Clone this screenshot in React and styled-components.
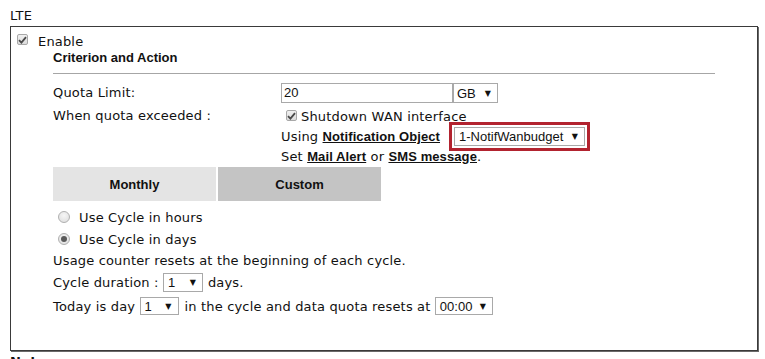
import React from "react";
import styled, { createGlobalStyle } from "styled-components";

const Global = createGlobalStyle`
  html, body { margin: 0; padding: 0; background: #fff; overflow: hidden; }
  body { font-family: "DejaVu Sans", Verdana, sans-serif; font-size: 13px; letter-spacing: 0.17px; color: #111; }
`;

const Page = styled.div`
  width: 765px;
  height: 359px;
  padding: 0 7px 0 10px;
  box-sizing: border-box;
`;

const Title = styled.div`
  font-size: 13px;
  line-height: 16px;
  padding-top: 8px;
  height: 18px;
`;

const Panel = styled.div`
  border: 1px solid #3a3a3a;
  box-shadow: 1px 1px 0 #6a6a6a;
  padding: 5px 6px 0 6px;
  height: 325px;
  box-sizing: border-box;
  width: 748px;
`;

const CheckRow = styled.label`
  display: flex;
  align-items: center;
  height: 18px;
  gap: 10px;
`;

const CheckBox = styled.span`
  width: 11px;
  height: 11px;
  box-sizing: border-box;
  border: 1px solid #a8a8a8;
  border-radius: 2px;
  background: linear-gradient(#f0f0f0, #dcdcdc);
  display: inline-flex;
  align-items: center;
  justify-content: center;
  flex: none;
  margin-top: ${(p) => p.$nudge || 0}px;
  svg { display: block; }
`;

const Section = styled.div`
  margin-left: 36px;
  width: 662px;
`;

const Heading = styled.div`
  font-family: "Liberation Sans", Arial, sans-serif;
  font-weight: bold;
  font-size: 13px;
  letter-spacing: 0;
  line-height: 16px;
  height: 16px;
`;

const Rule = styled.div`
  margin-top: 7px;
  border-top: 1px solid #a6a6a6;
  height: 0;
`;

const FormGrid = styled.div`
  display: grid;
  grid-template-columns: 228px 1fr;
  margin-top: 9px;
`;

const Label = styled.div`
  line-height: ${(p) => p.$lh || 20}px;
  height: ${(p) => p.$lh || 20}px;
  padding-top: ${(p) => p.$pt || 0}px;
`;

const Cell = styled.div`
  display: flex;
  flex-direction: column;
  align-items: flex-start;
`;

const Line = styled.div`
  display: flex;
  align-items: center;
  height: ${(p) => p.$h}px;
  margin-top: ${(p) => p.$mt || 0}px;
  white-space: pre;
`;

const TextInput = styled.div`
  width: 172px;
  height: 20px;
  box-sizing: border-box;
  border: 1px solid #a9a9a9;
  font-family: "Liberation Sans", Arial, sans-serif;
  font-size: 13px;
  letter-spacing: 0;
  line-height: 18px;
  padding-left: 2px;
`;

const Select = styled.div`
  display: inline-flex;
  align-items: center;
  justify-content: space-between;
  width: ${(p) => p.$w}px;
  height: ${(p) => p.$h || 19}px;
  box-sizing: border-box;
  border: 1px solid #a9a9a9;
  background: #fff;
  font-family: "Liberation Sans", Arial, sans-serif;
  font-size: 13px;
  letter-spacing: 0;
  padding: 0 6px 0 ${(p) => p.$pl || 4}px;
  margin: 0 ${(p) => p.$mr || 0}px 0 ${(p) => p.$ml || 0}px;
  flex: none;
  outline: ${(p) => (p.$highlight ? "3px solid #b2232f" : "none")};
  outline-offset: 2px;
  &::after {
    content: "▼";
    font-family: "DejaVu Sans", sans-serif;
    font-size: 8px;
    color: #111;
  }
`;

const Link = styled.a`
  font-family: "Liberation Sans", Arial, sans-serif;
  font-weight: bold;
  font-size: 13px;
  letter-spacing: 0.1px;
  color: #111;
  text-decoration: underline;
`;

const Tabs = styled.div`
  display: flex;
  gap: 2px;
  margin-top: 2px;
`;

const Tab = styled.div`
  width: 163px;
  height: 34px;
  display: flex;
  align-items: center;
  justify-content: center;
  background: ${(p) => (p.$active ? "#e4e4e4" : "#c4c4c4")};
  font-family: "Liberation Sans", Arial, sans-serif;
  font-weight: bold;
  font-size: 13px;
  letter-spacing: 0;
`;

const RadioRow = styled.label`
  display: flex;
  align-items: center;
  height: 22px;
  gap: 9px;
  padding-left: 5px;
`;

const Radio = styled.span`
  width: 12px;
  height: 12px;
  box-sizing: border-box;
  border-radius: 50%;
  border: 1px solid #b0b0b0;
  background: radial-gradient(circle at 50% 35%, #f6f6f6, #dcdcdc);
  display: inline-flex;
  align-items: center;
  justify-content: center;
  flex: none;
  &::after {
    content: "";
    width: 6px;
    height: 6px;
    border-radius: 50%;
    background: ${(p) => (p.$checked ? "#5a5a5a" : "transparent")};
  }
`;

const Radios = styled.div`
  margin-top: 5px;
`;

const TextLine = styled.div`
  display: flex;
  align-items: center;
  height: ${(p) => p.$h || 22}px;
  white-space: pre;
`;

const Note = styled.div`
  font-weight: bold;
  font-size: 13px;
  margin-top: 3px;
`;

const Check = () => (
  <svg width="9" height="8" viewBox="0 0 9 8">
    <path d="M1 4.2 L3.4 6.6 L8 1.2" fill="none" stroke="#4a4a4a" strokeWidth="1.8" />
  </svg>
);

export default function App() {
  return (
    <Page>
      <Global />
      <Title>LTE</Title>
      <Panel>
        <CheckRow>
          <CheckBox $nudge={-3}><Check /></CheckBox>
          <span>Enable</span>
        </CheckRow>
        <Section>
          <Heading>Criterion and Action</Heading>
          <Rule />
          <FormGrid>
            <Label>Quota Limit:</Label>
            <Cell>
              <Line $h={20}>
                <TextInput>20</TextInput>
                <Select $w={45} $h={20} $pl={3}>GB</Select>
              </Line>
            </Cell>
            <Label $lh={18} $pt={4}>When quota exceeded :</Label>
            <Cell>
              <Line $h={18} $mt={4}>
                <CheckBox $nudge={-1} style={{ marginLeft: 5, marginRight: 4 }}><Check /></CheckBox>
                Shutdown WAN interface
              </Line>
              <Line $h={19} $mt={2}>
                Using <Link>Notification Object</Link>
                <Select $w={131} $ml={14} $highlight>1-NotifWanbudget</Select>
              </Line>
              <Line $h={18} $mt={1}>
                Set <Link>Mail Alert</Link> or <Link>SMS message</Link>.
              </Line>
            </Cell>
          </FormGrid>
          <Tabs>
            <Tab $active>Monthly</Tab>
            <Tab>Custom</Tab>
          </Tabs>
          <Radios>
            <RadioRow>
              <Radio />
              <span>Use Cycle in hours</span>
            </RadioRow>
            <RadioRow>
              <Radio $checked />
              <span>Use Cycle in days</span>
            </RadioRow>
          </Radios>
          <TextLine $h={20}>Usage counter resets at the beginning of each cycle.</TextLine>
          <TextLine $h={24}>
            Cycle duration : <Select $w={40} $mr={5}>1</Select>days.
          </TextLine>
          <TextLine $h={24}>
            Today is day <Select $w={39} $h={18} $mr={6}>1</Select>in the cycle and data quota resets at <Select $w={58} $h={18}>00:00</Select>
          </TextLine>
        </Section>
      </Panel>
      <Note>Note:</Note>
    </Page>
  );
}
